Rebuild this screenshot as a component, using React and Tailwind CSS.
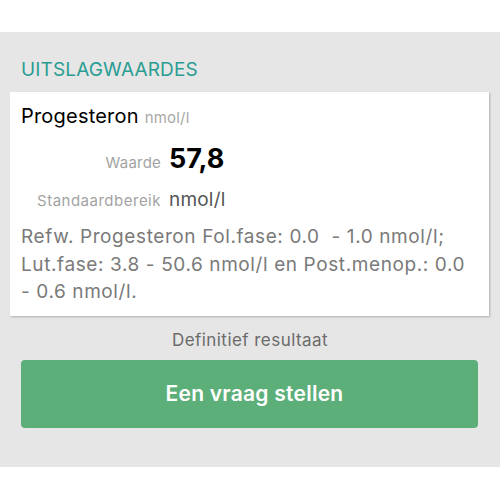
export default function App() {
  return (
    <div className="w-[500px] h-[500px] bg-white pt-[32px]" style={{ fontFamily: 'Inter, "Noto Sans", sans-serif' }}>
      <div className="h-[435px] bg-[#e6e6e6] flex flex-col">
        <div className="pl-[21px] pt-[26px] text-[19px] leading-[24px] text-[#2a9d93] tracking-[0.15px]">UITSLAGWAARDES</div>
        <div className="mt-[10px] ml-[10px] w-[479px] bg-white shadow-[1px_1px_2px_rgba(0,0,0,0.25)] pl-[11px] pr-[10px] pt-[10px] pb-[10px]">
          <div className="flex items-baseline leading-[28px]">
            <span className="text-[20px] text-black tracking-[0.2px]">Progesteron</span>
            <span className="ml-[6px] text-[15px] text-[#a8a8a8] tracking-[0.2px]">nmol/l</span>
          </div>
          <div className="mt-[11px] grid grid-cols-[140px_1fr] gap-x-[8px] items-baseline">
            <span className="text-[15px] text-[#a3a3a3] text-right tracking-[0.2px]">Waarde</span>
            <span className="text-[27px] leading-[32px] font-bold text-black">57,8</span>
          </div>
          <div className="mt-[11px] grid grid-cols-[140px_1fr] gap-x-[8px] items-baseline">
            <span className="text-[15px] text-[#a3a3a3] text-right tracking-[0.5px]">Standaardbereik</span>
            <span className="text-[19px] leading-[28px] text-[#555] tracking-[0.2px]">nmol/l</span>
          </div>
          <div className="mt-[9px] text-[19px] leading-[27.5px] text-[#7a7a7a] whitespace-pre tracking-[0.6px]">
            <div>Refw. Progesteron Fol.fase: 0.0  - 1.0 nmol/l;</div>
            <div>Lut.fase: 3.8 - 50.6 nmol/l en Post.menop.: 0.0</div>
            <div>- 0.6 nmol/l.</div>
          </div>
        </div>
        <div className="mt-[12px] text-center text-[17px] leading-[24px] text-[#6b6b6b] tracking-[0.45px]">Definitief resultaat</div>
        <div className="mt-[8px] ml-[21px] w-[457px] h-[68px] rounded-[4px] bg-[#5daf7a] flex items-center justify-center pl-[10px]">
          <span className="text-white text-[21px] font-semibold tracking-[0.25px]">Een vraag stellen</span>
        </div>
      </div>
    </div>
  );
}
